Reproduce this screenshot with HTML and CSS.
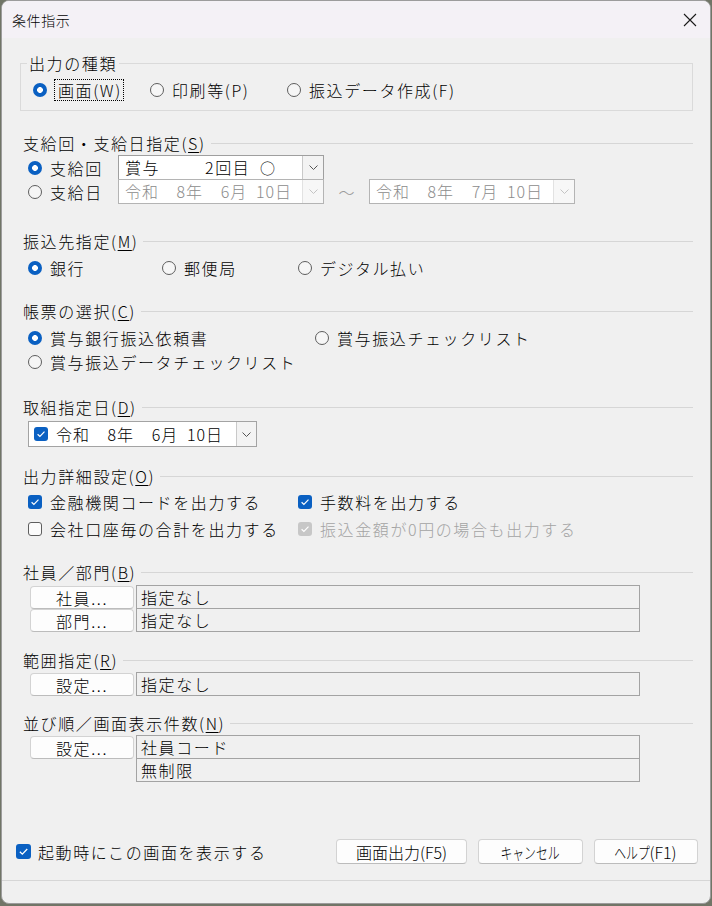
FILE: index.html
```html
<!DOCTYPE html>
<html lang="ja">
<head>
  <meta charset="UTF-8">
  <title>条件指示</title>
  <link rel="stylesheet" href="styles.css">
</head>
<body>

<div class="window">
  <div class="titlebar">
    <span class="title">条件指示</span>
    <svg class="close" viewBox="0 0 14 14"><path d="M1 1L13 13M13 1L1 13"/></svg>
  </div>

  <div class="content">
    <fieldset class="group">
      <legend>出力の種類</legend>
      <div class="opts kind-opts">
        <label class="opt kind-a"><span class="radio on"></span><span class="focus">画面(W)</span></label>
        <label class="opt kind-b"><span class="radio"></span>印刷等(P)</label>
        <label class="opt"><span class="radio"></span>振込データ作成(F)</label>
      </div>
    </fieldset>

    <section class="sec sec-pay">
      <h2 class="sec-head">支給回・支給日指定(<u>S</u>)</h2>
      <div class="pay-row">
        <label class="opt pay-label"><span class="radio on"></span>支給回</label>
        <div class="combo">
          <span class="combo-text">賞与　　&ensp;2回目&ensp;<span class="mark">○</span></span>
          <span class="drop"><svg viewBox="0 0 9 5"><path d="M0.5 0.5L4.5 4.5L8.5 0.5"/></svg></span>
        </div>
      </div>
      <div class="pay-row">
        <label class="opt pay-label"><span class="radio"></span>支給日</label>
        <div class="combo off">
          <span class="combo-text date">令和&ensp;&ensp;8年&ensp;&ensp;6月&ensp;10日</span>
          <span class="drop"><svg viewBox="0 0 9 5"><path d="M0.5 0.5L4.5 4.5L8.5 0.5"/></svg></span>
        </div>
        <span class="tilde">～</span>
        <div class="combo off">
          <span class="combo-text date">令和&ensp;&ensp;8年&ensp;&ensp;7月&ensp;10日</span>
          <span class="drop"><svg viewBox="0 0 9 5"><path d="M0.5 0.5L4.5 4.5L8.5 0.5"/></svg></span>
        </div>
      </div>
    </section>

    <section class="sec sec-dest">
      <h2 class="sec-head">振込先指定(<u>M</u>)</h2>
      <div class="opts dest-opts">
        <label class="opt dest-a"><span class="radio on"></span>銀行</label>
        <label class="opt dest-b"><span class="radio"></span>郵便局</label>
        <label class="opt"><span class="radio"></span>デジタル払い</label>
      </div>
    </section>

    <section class="sec sec-form">
      <h2 class="sec-head">帳票の選択(<u>C</u>)</h2>
      <div class="opts form-opts">
        <label class="opt form-a"><span class="radio on"></span>賞与銀行振込依頼書</label>
        <label class="opt"><span class="radio"></span>賞与振込チェックリスト</label>
      </div>
      <div class="opts form-opts2">
        <label class="opt"><span class="radio"></span>賞与振込データチェックリスト</label>
      </div>
    </section>

    <section class="sec sec-date">
      <h2 class="sec-head">取組指定日(<u>D</u>)</h2>
      <div class="datebox">
        <span class="box on"><svg viewBox="0 0 14 14"><path d="M3.6 7.3L5.9 9.5L10.5 4.7"/></svg></span>
        <span class="date-text date">令和&ensp;&ensp;8年&ensp;&ensp;6月&ensp;10日</span>
        <span class="drop"><svg viewBox="0 0 9 5"><path d="M0.5 0.5L4.5 4.5L8.5 0.5"/></svg></span>
      </div>
    </section>

    <section class="sec sec-detail">
      <h2 class="sec-head">出力詳細設定(<u>O</u>)</h2>
      <div class="opts detail-opts">
        <label class="opt detail-a"><span class="box on"><svg viewBox="0 0 14 14"><path d="M3.6 7.3L5.9 9.5L10.5 4.7"/></svg></span>金融機関コードを出力する</label>
        <label class="opt"><span class="box on"><svg viewBox="0 0 14 14"><path d="M3.6 7.3L5.9 9.5L10.5 4.7"/></svg></span>手数料を出力する</label>
      </div>
      <div class="opts detail-opts2">
        <label class="opt detail-a"><span class="box"></span>会社口座毎の合計を出力する</label>
        <label class="opt dim"><span class="box dis"><svg viewBox="0 0 14 14"><path d="M3.6 7.3L5.9 9.5L10.5 4.7"/></svg></span>振込金額が0円の場合も出力する</label>
      </div>
    </section>

    <section class="sec sec-staff">
      <h2 class="sec-head">社員／部門(<u>B</u>)</h2>
      <div class="pick-row first">
        <button class="pick-btn">社員...</button>
        <div class="field">指定なし</div>
      </div>
      <div class="pick-row">
        <button class="pick-btn">部門...</button>
        <div class="field">指定なし</div>
      </div>
    </section>

    <section class="sec sec-range">
      <h2 class="sec-head">範囲指定(<u>R</u>)</h2>
      <div class="pick-row first">
        <button class="pick-btn">設定...</button>
        <div class="field">指定なし</div>
      </div>
    </section>

    <section class="sec sec-order">
      <h2 class="sec-head">並び順／画面表示件数(<u>N</u>)</h2>
      <div class="pick-row first">
        <button class="pick-btn">設定...</button>
        <div class="fields">
          <div class="field">社員コード</div>
          <div class="field">無制限</div>
        </div>
      </div>
    </section>
  </div>

  <div class="footer">
    <label class="opt startup"><span class="box on big"><svg viewBox="0 0 14 14"><path d="M3.6 7.3L5.9 9.5L10.5 4.7"/></svg></span>起動時にこの画面を表示する</label>
    <div class="actions">
      <button class="btn btn-main">画面出力(F5)</button>
      <button class="btn"><span class="narrow n5">キャンセル</span></button>
      <button class="btn"><span class="narrow n3">ヘルプ</span>(F1)</button>
    </div>
  </div>
  <div class="statusbar"></div>
</div>

</body>
</html>
```

FILE: styles.css
```css
* { box-sizing: border-box; }
body { margin: 0; background: #717567; font-family: "Noto Sans CJK JP", sans-serif; font-size: 16px; font-weight: 300; letter-spacing: 1.6px; color: #000; }

.window { width: 710px; height: 904px; margin: 0 1px; border: 1px solid #9c9c9c; border-radius: 8px; overflow: hidden; display: flex; flex-direction: column; background: #f0f0f0; }

/* title bar */
.titlebar { height: 37px; flex: none; display: flex; align-items: center; justify-content: space-between; padding: 0 13px 0 10px; background: #f4f1f6; }
.title { font-size: 14px; letter-spacing: 0.6px; line-height: 20px; }
.close { width: 14px; height: 14px; }
.close path { stroke: #1a1a1a; stroke-width: 1.1; fill: none; }

.content { flex: 1; padding: 0 17px 0 18px; }

/* group box at the top */
.group { margin: 15px 0 0; padding: 6px 6px 9px; border: 1px solid #dadada; }
.group legend { padding: 0 2px; line-height: 20px; }

/* section headers with a rule to the right */
.sec-head { margin: 0; height: 20px; padding-left: 3px; display: flex; align-items: center; font-size: 16px; font-weight: 300; line-height: 20px; white-space: nowrap; }
.sec-head::after { content: ""; flex: 1; height: 1px; margin-left: 5px; background: #d6d6d6; }
.sec-head u { text-underline-offset: 2px; }

.sec-pay { margin-top: 22px; }
.sec-dest { margin-top: 27px; }
.sec-form { margin-top: 22px; }
.sec-date { margin-top: 24px; }
.sec-detail { margin-top: 19px; }
.sec-staff { margin-top: 22px; }
.sec-range { margin-top: 18px; }
.sec-order { margin-top: 17px; }

/* radio / checkbox rows */
.opts { display: flex; align-items: center; height: 22px; padding-left: 8px; }
.kind-opts { padding-left: 6px; }
.opt { display: flex; align-items: center; gap: 8px; height: 22px; line-height: 22px; white-space: nowrap; }
.kind-a { width: 117px; }
.kind-b { width: 137px; }
.dest-opts, .form-opts { margin-top: 6px; }
.dest-a { width: 134px; }
.dest-b { width: 136px; }
.form-opts2 { margin-top: 2px; }
.form-a { width: 287px; }
.detail-opts, .detail-opts2 { margin-top: 5px; }
.detail-a { width: 270px; }
.dim { color: #a3a3a3; }

.focus { outline: 1px dotted #000; outline-offset: 0; padding: 0 1px 0 3px; line-height: 20px; }

.radio { flex: none; width: 14px; height: 14px; border-radius: 50%; border: 1px solid #5e5e5e; background: #f6f6f6; }
.radio.on { border: none; background: radial-gradient(circle, #fff 0 2.6px, #0a60c2 3.2px); }

.box { flex: none; width: 14px; height: 14px; border-radius: 3px; border: 1px solid #5e5e5e; background: #fbfbfb; display: flex; }
.box.on { border: none; background: #0a60c2; }
.box.dis { border: none; background: #c7c7c7; }
.box.big { width: 15px; height: 15px; }
.box svg { width: 100%; height: 100%; }
.box path { stroke: #fff; stroke-width: 1.2; fill: none; }

/* combo boxes */
.pay-row { display: flex; align-items: center; height: 25px; padding-left: 8px; }
.pay-row:first-of-type { margin-top: 2px; }
.pay-row + .pay-row { margin-top: -1px; }
.pay-label { width: 90px; }
.combo { width: 206px; height: 25px; display: flex; border: 1px solid #9f9f9f; background: #fff; }
.combo-text { flex: 1; padding-left: 6px; line-height: 23px; white-space: pre; }
.date { letter-spacing: 0.9px; }
.mark { font-size: 15px; }
.combo.off { border-color: #b4b4b4; color: #8c8c8c; }
.drop { width: 21px; flex: none; display: flex; align-items: center; justify-content: center; background: #f3f3f3; border-left: 1px solid #c9c9c9; }
.drop svg { width: 9px; height: 5px; }
.drop path { stroke: #555; stroke-width: 1; fill: none; }
.off .drop { background: #f7f7f7; border-left-color: #e2e2e2; }
.off .drop path { stroke: #c4c4c4; }
.tilde { width: 45px; text-align: center; color: #9a9a9a; letter-spacing: 0; }

/* date picker */
.datebox { margin: 4px 0 0 8px; width: 229px; height: 26px; display: flex; align-items: center; border: 1px solid #a3a3a3; background: #fff; padding-left: 5px; }
.date-text { flex: 1; padding-left: 8px; white-space: pre; line-height: 24px; }
.datebox .drop { height: 24px; width: 20px; }

/* button + read-only field rows */
.pick-row { display: flex; align-items: flex-start; padding-left: 10px; margin-top: -1px; }
.sec-staff .pick-row.first { margin-top: 3px; }
.sec-range .pick-row.first, .sec-order .pick-row.first { margin-top: 2px; }
.pick-btn { width: 104px; height: 23px; margin: 1px 2px 0 0; padding: 0; font: inherit; letter-spacing: 1.6px; line-height: 20px; color: #000; background: #fdfdfd; border: 1px solid #d3d3d3; border-bottom-color: #bcbcbc; border-radius: 4px; }
.field { width: 504px; height: 24px; padding-left: 4px; line-height: 22px; border: 1px solid #a3a3a3; background: #f0f0f0; }
.fields .field + .field { margin-top: -1px; }

/* footer */
.footer { flex: none; display: flex; align-items: center; justify-content: space-between; height: 25px; margin-bottom: 16px; padding: 0 12px 0 14px; }
.startup { gap: 7px; }
.actions { display: flex; gap: 11px; }
.btn { width: 104px; height: 25px; padding: 0; font: inherit; line-height: 22px; color: #000; background: #fdfdfd; border: 1px solid #d3d3d3; border-bottom-color: #bcbcbc; border-radius: 4px; }
.btn-main { width: 131px; }
.btn + .btn { width: 105px; }
.btn + .btn + .btn { width: 104px; }
/* half-width katakana look for the button captions */
.narrow { display: inline-block; transform: scaleX(0.74); }
.n5 { margin: 0 -11px; }
.n3 { margin: 0 -7px; }

.statusbar { flex: none; height: 23px; border-top: 1px solid #d6d6d6; }
```
